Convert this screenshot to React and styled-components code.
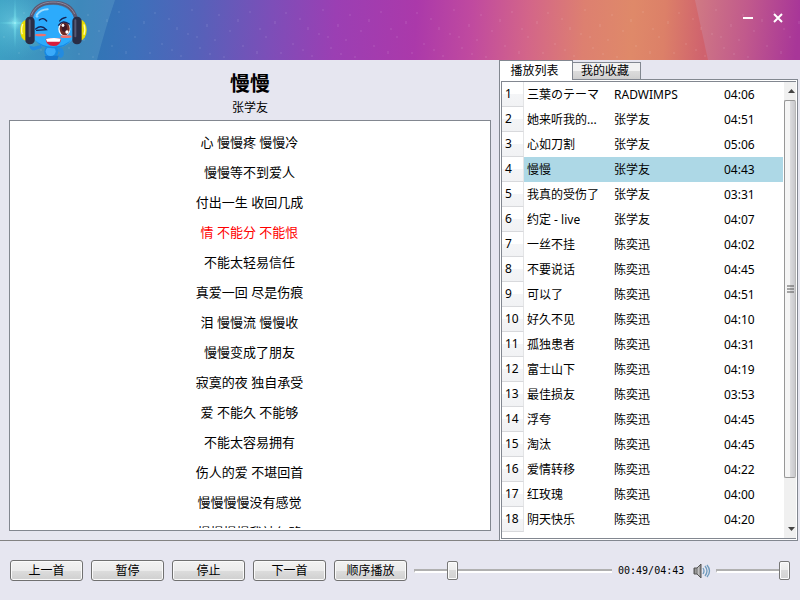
import React, { useState } from "react";
import styled, { createGlobalStyle } from "styled-components";

const songs = [
  ["三葉のテーマ", "RADWIMPS", "04:06"],
  ["她来听我的...", "张学友", "04:51"],
  ["心如刀割", "张学友", "05:06"],
  ["慢慢", "张学友", "04:43"],
  ["我真的受伤了", "张学友", "03:31"],
  ["约定 - live", "张学友", "04:07"],
  ["一丝不挂", "陈奕迅", "04:02"],
  ["不要说话", "陈奕迅", "04:45"],
  ["可以了", "陈奕迅", "04:51"],
  ["好久不见", "陈奕迅", "04:10"],
  ["孤独患者", "陈奕迅", "04:31"],
  ["富士山下", "陈奕迅", "04:19"],
  ["最佳损友", "陈奕迅", "03:53"],
  ["浮夸", "陈奕迅", "04:45"],
  ["淘汰", "陈奕迅", "04:45"],
  ["爱情转移", "陈奕迅", "04:22"],
  ["红玫瑰", "陈奕迅", "04:00"],
  ["阴天快乐", "陈奕迅", "04:20"],
];

const lyrics = [
  "心 慢慢疼 慢慢冷",
  "慢慢等不到爱人",
  "付出一生 收回几成",
  "情 不能分 不能恨",
  "不能太轻易信任",
  "真爱一回 尽是伤痕",
  "泪 慢慢流 慢慢收",
  "慢慢变成了朋友",
  "寂寞的夜 独自承受",
  "爱 不能久 不能够",
  "不能太容易拥有",
  "伤人的爱 不堪回首",
  "慢慢慢慢没有感觉",
  "慢慢慢慢我被忽略",
];

const GlobalStyle = createGlobalStyle`
  * { box-sizing: border-box; }
  body {
    margin: 0;
    background: #fff;
    color: #000;
    font: 12px "Noto Sans", "Noto Sans CJK SC", sans-serif;
  }
  button, input { font: inherit; color: inherit; margin: 0; padding: 0; }
`;

const Player = styled.div`
  display: flex;
  flex-direction: column;
  height: 100vh;
  padding: 0 1px 1px 0;
  overflow: hidden;
`;

const TitleBar = styled.header`
  position: relative;
  flex: none;
  display: flex;
  justify-content: space-between;
  height: 60px;
`;

const Backdrop = styled.svg`
  position: absolute;
  inset: 0;
  width: 100%;
  height: 100%;
`;

const Mascot = styled.svg`
  position: relative;
  width: 100px;
  height: 60px;
`;

const WindowControls = styled.div`
  position: relative;
  display: flex;
  gap: 12px;
  padding: 9px 13px 0 0;
`;

const WindowButton = styled.button`
  width: 18px;
  height: 18px;
  border: 0;
  background: none;
  svg { display: block; }
`;

const Main = styled.main`
  flex: 1;
  display: flex;
  min-height: 0;
  background: #e6e6f0;
`;

const LyricPanel = styled.section`
  flex: 1;
  display: flex;
  flex-direction: column;
  padding: 12px 8px 9px 9px;
  border-bottom: 1px solid #828282;
  text-align: center;
`;

const SongTitle = styled.h1`
  margin: 0;
  font-size: 20px;
  line-height: 24px;
`;

const Artist = styled.p`
  margin: 0;
  line-height: 24px;
`;

const LyricBox = styled.div`
  flex: 1;
  display: flex;
  min-height: 0;
  padding: 6px 1px 2px 0;
  border: 1px solid #828790;
  background: #fff;
  font-size: 13px;
`;

const LyricScroll = styled.div`
  flex: 1;
  overflow: hidden;
`;

const LyricLine = styled.p`
  margin: 0;
  line-height: 30px;
  color: ${(p) => (p.$current ? "#f00" : "#000")};
`;

const ListPanel = styled.section`
  flex: none;
  display: flex;
  flex-direction: column;
  width: 301px;
  padding-right: 2px;
`;

const Tabs = styled.div`
  flex: none;
  display: flex;
  align-items: flex-end;
  height: 19px;
  border-left: 1px solid #828790;
`;

const Tab = styled.button`
  position: relative;
  width: ${(p) => (p.$active ? 73 : 68)}px;
  height: ${(p) => (p.$active ? 20 : 17)}px;
  margin-bottom: ${(p) => (p.$active ? -1 : 0)}px;
  padding-right: 3px;
  border: 1px solid #828790;
  border-width: 1px 1px 0 0;
  background: ${(p) =>
    p.$active ? "#fff" : "linear-gradient(#f2f2f2 50%, #dcdcdc 50%, #cfcfcf)"};
  line-height: 16px;
`;

const TabPane = styled.div`
  flex: 1;
  display: flex;
  min-height: 0;
  padding: 1px;
  border: 1px solid #828790;
  background: #fff;
`;

const ListFrame = styled.div`
  flex: 1;
  display: flex;
  min-width: 0;
  overflow: hidden;
  border: 1px solid #828790;
  border-right: 0;
`;

const ListBody = styled.div`
  flex: 1;
  overflow: hidden;
`;

const SongTable = styled.table`
  width: 100%;
  table-layout: fixed;
  border-spacing: 0;
  td, th { height: 25px; padding: 0 0 0 3px; line-height: 24px; white-space: nowrap; }
`;

const Row = styled.tr`
  td { background: ${(p) => (p.$playing ? "#add8e6" : "#fff")}; }
`;

const RowNumber = styled.th`
  border-right: 1px solid #e3e4e6;
  border-bottom: 1px solid #d8d9dc;
  background: linear-gradient(#fff 50%, #f4f5f7 50%, #f1f2f4);
  font-weight: 400;
  text-align: left;
`;

const NumberCol = styled.col`width: 22px;`;
const NameCol = styled.col`width: 87px;`;
const TimeCol = styled.col`width: 62px;`;

const ScrollBar = styled.div`
  flex: none;
  display: flex;
  flex-direction: column;
  width: 13px;
  border-left: 1px solid #fff;
  background: #f0f0f0;
`;

const ScrollArrow = styled.button`
  flex: none;
  display: flex;
  align-items: center;
  justify-content: center;
  height: 18px;
  border: 0;
  background: #f0f0f0;
  padding-left: 3px;
`;

const ScrollTrack = styled.div`
  flex: 1;
`;

const ScrollThumb = styled.div`
  display: flex;
  align-items: center;
  justify-content: center;
  height: 90%;
  border: 1px solid #979797;
  border-right-color: #b8b8b8;
  border-radius: 2px;
  background: linear-gradient(90deg, #f5f5f5 45%, #dcdcde 50%, #c8c8cc);
`;

const Footer = styled.footer`
  flex: none;
  display: flex;
  align-items: center;
  height: 59px;
  padding: 0 10px;
  background: #e6e6f0;
`;

const Buttons = styled.div`
  display: flex;
  gap: 8px;
  margin-right: 7px;
`;

const PushButton = styled.button`
  width: 73px;
  height: 21px;
  border: 1px solid #707070;
  border-radius: 3px;
  background: linear-gradient(#f2f2f2, #ebebeb 50%, #dddddd 50%, #cfcfcf);
  box-shadow: inset 0 0 0 1px #fafafa;
  line-height: 18px;
`;

const Slider = styled.input`
  appearance: none;
  flex: ${(p) => (p.$wide ? "1" : "none")};
  width: 74px;
  min-width: 0;
  height: 20px;
  background: none;
  &::-webkit-slider-runnable-track {
    height: 4px;
    border: 1px solid #b0b0b0;
    border-width: 2px 0 0 1px;
    border-bottom: 2px solid #fff;
  }
  &::-webkit-slider-thumb {
    appearance: none;
    width: 11px;
    height: 19px;
    margin-top: -10px;
    border: 1px solid #777;
    border-radius: 2px;
    background: linear-gradient(#f5f5f5, #ececec 50%, #dadada 50%, #d2d2d2);
    box-shadow: inset 0 0 0 1px #fcfcfc;
  }
`;

const Time = styled.output`
  width: 67px;
  margin: 0 8px 0 6px;
  font-family: "DejaVu Sans Mono", monospace;
  font-size: 10px;
  line-height: 18px;
  white-space: nowrap;
`;

const VolumeIcon = styled.svg`
  flex: none;
  width: 18px;
  height: 18px;
  margin-right: 5px;
`;

function HeaderArt() {
  return (
    <Backdrop viewBox="0 0 800 60" preserveAspectRatio="none" aria-hidden="true">
      <defs>
        <linearGradient id="sky" gradientUnits="userSpaceOnUse" x1="0" y1="0" x2="800" y2="40">
          <stop offset="0" stopColor="#2b94bd" />
          <stop offset=".1" stopColor="#2c78b4" />
          <stop offset=".17" stopColor="#3d70ba" />
          <stop offset=".25" stopColor="#5661b9" />
          <stop offset=".34" stopColor="#7d4eb8" />
          <stop offset=".42" stopColor="#9b3fb3" />
          <stop offset=".52" stopColor="#ab39aa" />
          <stop offset=".59" stopColor="#c04a9f" />
          <stop offset=".66" stopColor="#d36589" />
          <stop offset=".73" stopColor="#dd8070" />
          <stop offset=".79" stopColor="#df8969" />
          <stop offset=".83" stopColor="#dc8068" />
          <stop offset=".88" stopColor="#cf626e" />
          <stop offset="1" stopColor="#cf626e" />
        </linearGradient>
        <linearGradient id="edge" gradientUnits="userSpaceOnUse" x1="695" y1="0" x2="800" y2="10">
          <stop offset="0" stopColor="#d07a83" />
          <stop offset=".5" stopColor="#c15a8c" />
          <stop offset="1" stopColor="#a83698" />
        </linearGradient>
        <radialGradient id="glow">
          <stop offset="0" stopColor="#c4ffff" />
          <stop offset=".2" stopColor="#7fe4f0" stopOpacity=".7" />
          <stop offset="1" stopColor="#55c8dc" stopOpacity="0" />
        </radialGradient>
        <pattern id="rain" width="131" height="60" patternUnits="userSpaceOnUse">
          <path
            d="M4 36v2M13 21v3M19 52v2M24 12v2M31 43v2M38 18v2M46 27v3M50 55v2M57 33v2M61 9v2M69 47v2M76 24v3M84 39v2M88 14v2M93 56v2M99 30v2M107 19v3M112 45v2M119 11v2M126 51v3M129 28v2M41 49v2M79 53v2M66 36v2"
            stroke="#fff"
            strokeOpacity=".13"
          />
        </pattern>
      </defs>
      <path d="M0 0h800v60H0z" fill="url(#sky)" />
      <path d="M0 0h115Q106 26 97 60H0z" fill="#9adbe0" fillOpacity=".17" />
      <path d="M695 0h105v60h-92z" fill="url(#edge)" />
      <ellipse cx="15" cy="23" rx="42" ry="36" fill="url(#glow)" fillOpacity=".5" />
      <ellipse cx="15" cy="23" rx="2" ry="26" fill="url(#glow)" />
      <ellipse cx="15" cy="23" rx="18" ry="2" fill="url(#glow)" />
      <ellipse cx="15" cy="23" rx="5" ry="8" fill="url(#glow)" />
      <path d="M0 0h800v60H0z" fill="url(#rain)" />
    </Backdrop>
  );
}

function MascotArt() {
  return (
    <Mascot viewBox="0 0 300 180" aria-hidden="true">
      <path d="M88 137q2 14 16 14l22-8-4-8-20 5zM172 147q16-9 19 7 3 17-10 20l-8-8 8-7-7-6z" fill="#238be0" />
      <ellipse cx="154" cy="155" rx="21" ry="20" fill="#1689e2" />
      <path d="M134 168l4 12h34l4-13z" fill="#1776cc" />
      <ellipse cx="152" cy="154" rx="15" ry="14" fill="#3aaafa" />
      <path d="M91 74C94 32 121 15 160 15s66 23 69 63c3 34-23 66-69 66S88 108 91 74z" fill="#2cabfc" />
      <path d="M105 120q24 21 55 20 35 0 54-22-16 27-55 27-35-1-54-25z" fill="#1889e4" />
      <path d="M93 54C100 24 123 8 160 8s60 17 68 47" fill="none" stroke="#5c5871" strokeWidth="11" />
      <path d="M94 45C105 19 129 6 159 6s54 12 65 36" fill="none" stroke="#8c889d" strokeWidth="3" />
      <path d="M110 45q12-17 33-17" fill="none" stroke="#c4edff" strokeOpacity=".75" strokeWidth="6" strokeLinecap="round" />
      <circle cx="111" cy="49" r="4" fill="#8bd2ff" />
      <path d="M118 60q12-10 22 3M179 63q6-9 19-11M107 87q17-14 32 2l-29 2" fill="none" stroke="#172455" strokeWidth="4" strokeLinecap="round" />
      <ellipse cx="193" cy="87" rx="18" ry="21" fill="#fff" />
      <ellipse cx="194" cy="86" rx="15" ry="20" fill="#712d27" />
      <ellipse cx="193" cy="83" rx="8" ry="12" fill="#3d1826" />
      <ellipse cx="189" cy="76" rx="4" ry="5" fill="#fff" />
      <circle cx="201" cy="96" r="5" fill="#fff" />
      <path d="M175 77q13-20 34-4" fill="none" stroke="#172455" strokeWidth="4" />
      <ellipse cx="122" cy="105" rx="17" ry="4" fill="#ef706d" />
      <ellipse cx="198" cy="110" rx="17" ry="4" fill="#ef706d" />
      <path d="M137 117q22-6 46-1-1 22-23 22-21 0-23-21z" fill="#d91c3c" />
      <path d="M138 117q22-6 44-1l-3 9h-38z" fill="#fff" />
      <ellipse cx="79" cy="91" rx="19" ry="31" fill="#eadd00" />
      <ellipse cx="241" cy="90" rx="19" ry="31" fill="#eadd00" />
      <path d="M68 72q-6 17-1 31M252 73q5 17 0 31" fill="none" stroke="#fffcae" strokeWidth="4" />
      <rect x="76" y="50" width="28" height="83" rx="13" fill="#292d45" />
      <rect x="217" y="50" width="28" height="83" rx="13" fill="#292d45" />
      <path d="M89 61v48M226 61v48" stroke="#565974" strokeWidth="6" strokeLinecap="round" />
    </Mascot>
  );
}

function formatTime(seconds) {
  const pad = (n) => String(n).padStart(2, "0");
  return `${pad(Math.floor(seconds / 60))}:${pad(seconds % 60)}`;
}

export default function App() {
  const [position, setPosition] = useState(49);
  const [volume, setVolume] = useState(100);

  return (
    <>
      <GlobalStyle />
      <Player>
        <TitleBar>
          <HeaderArt />
          <MascotArt />
          <WindowControls>
            <WindowButton aria-label="最小化">
              <svg width="18" height="18"><path d="M4 9h10" stroke="#fff" strokeWidth="2" /></svg>
            </WindowButton>
            <WindowButton aria-label="关闭">
              <svg width="18" height="18"><path d="M5 5l8 8M13 5l-8 8" stroke="#fff" strokeWidth="2" /></svg>
            </WindowButton>
          </WindowControls>
        </TitleBar>

        <Main>
          <LyricPanel>
            <SongTitle>慢慢</SongTitle>
            <Artist>张学友</Artist>
            <LyricBox>
              <LyricScroll>
                {lyrics.map((line, i) => (
                  <LyricLine key={line} $current={i === 3}>{line}</LyricLine>
                ))}
              </LyricScroll>
            </LyricBox>
          </LyricPanel>

          <ListPanel>
            <Tabs role="tablist">
              <Tab role="tab" aria-selected="true" $active>播放列表</Tab>
              <Tab role="tab" aria-selected="false">我的收藏</Tab>
            </Tabs>
            <TabPane role="tabpanel">
              <ListFrame>
                <ListBody>
                  <SongTable>
                    <colgroup><NumberCol /><NameCol /><col /><TimeCol /></colgroup>
                    <tbody>
                      {songs.map(([name, artist, length], i) => (
                        <Row key={name} $playing={i === 3}>
                          <RowNumber scope="row">{i + 1}</RowNumber>
                          <td>{name}</td>
                          <td>{artist}</td>
                          <td>{length}</td>
                        </Row>
                      ))}
                    </tbody>
                  </SongTable>
                </ListBody>
                <ScrollBar>
                  <ScrollArrow aria-label="向上滚动">
                    <svg width="7" height="4"><path d="M0 4l3.5-4L7 4z" fill="#444" /></svg>
                  </ScrollArrow>
                  <ScrollTrack>
                    <ScrollThumb>
                      <svg width="7" height="8"><path d="M0 1h7M0 4h7M0 7h7" stroke="#555" /></svg>
                    </ScrollThumb>
                  </ScrollTrack>
                  <ScrollArrow aria-label="向下滚动">
                    <svg width="7" height="4"><path d="M0 0l3.5 4L7 0z" fill="#444" /></svg>
                  </ScrollArrow>
                </ScrollBar>
              </ListFrame>
            </TabPane>
          </ListPanel>
        </Main>

        <Footer>
          <Buttons>
            <PushButton>上一首</PushButton>
            <PushButton>暂停</PushButton>
            <PushButton>停止</PushButton>
            <PushButton>下一首</PushButton>
            <PushButton>顺序播放</PushButton>
          </Buttons>
          <Slider $wide type="range" aria-label="播放进度" min="0" max="283" value={position}
            onChange={(e) => setPosition(Number(e.target.value))} />
          <Time>{formatTime(position)}/04:43</Time>
          <VolumeIcon viewBox="0 0 18 18" aria-hidden="true">
            <defs>
              <linearGradient id="cone"><stop stopColor="#666" /><stop offset=".5" stopColor="#ddd" /><stop offset="1" stopColor="#777" /></linearGradient>
            </defs>
            <path d="M1 6h3l4-4v14l-4-4H1z" fill="url(#cone)" stroke="#555" />
            <path d="M4 6v6" stroke="#555" />
            <path d="M10 6q2 3 0 6M12 4q4 5 0 10M14 3q5 6 0 12" fill="none" stroke="#6f9bbd" strokeWidth="1.3" />
          </VolumeIcon>
          <Slider type="range" aria-label="音量" min="0" max="100" value={volume}
            onChange={(e) => setVolume(Number(e.target.value))} />
        </Footer>
      </Player>
    </>
  );
}
